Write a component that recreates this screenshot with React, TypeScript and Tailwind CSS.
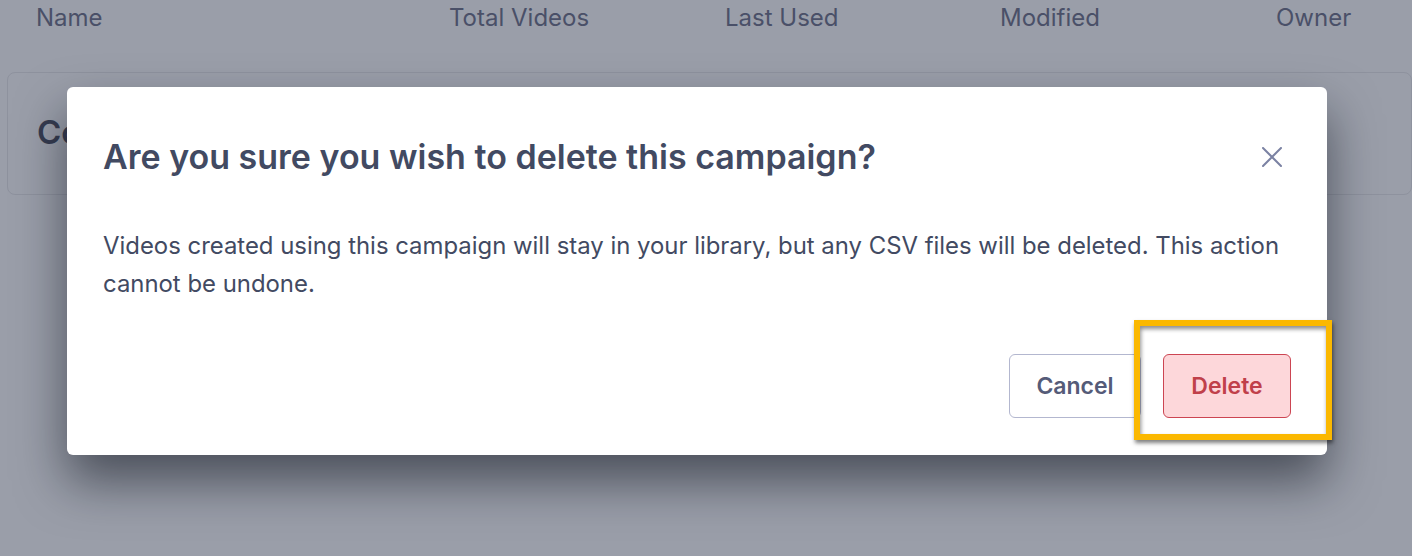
const columns = [
  { label: 'Name', width: 'w-[413px]' },
  { label: 'Total Videos', width: 'w-[276px]' },
  { label: 'Last Used', width: 'w-[275px]' },
  { label: 'Modified', width: 'w-[276px]' },
  { label: 'Owner', width: '' },
];

function CloseIcon() {
  return (
    <svg width="20" height="20" viewBox="0 0 20 20" fill="none" stroke="currentColor" strokeWidth="2" strokeLinecap="round">
      <path d="M1 1L19 19M19 1L1 19" />
    </svg>
  );
}

function DeleteModal() {
  return (
    <div className="w-[1260px] rounded-md bg-white px-[36px] pt-[40px] pb-[37px] shadow-[0_26px_50px_rgba(10,14,26,0.55)]">
      <div className="flex items-center justify-between">
        <h2 className="text-[34px] font-semibold leading-[60px] text-[#424a62]">
          Are you sure you wish to delete this campaign?
        </h2>
        <button type="button" className="mr-[9px] text-[#7b82a3]">
          <CloseIcon />
        </button>
      </div>

      <p className="mt-[40px] text-[23.9px] leading-[38px] text-[#424a62]">
        Videos created using this campaign will stay in your library, but any CSV files will be deleted. This action
        <br />
        cannot be undone.
      </p>

      <div className="mt-[51px] flex justify-end gap-[22px]">
        <button
          type="button"
          className="h-[64px] w-[132px] rounded-md border border-[#b3b7cf] text-[23px] font-semibold text-[#555b78]"
        >
          Cancel
        </button>
        <button
          type="button"
          className="h-[64px] w-[128px] rounded-md border border-[#cc4552] bg-[#fdd7da] text-[23px] font-semibold text-[#c0404a]"
        >
          Delete
        </button>
      </div>
    </div>
  );
}

export default function App() {
  return (
    <div className="relative h-[556px] w-[1412px] overflow-hidden bg-[#9a9ea9] font-['Inter',sans-serif]">
      {/* page behind the overlay, already dimmed */}
      <div className="flex pl-[36px] pt-[3px] text-[24px] leading-[30px] text-[#4a5068]">
        {columns.map((col) => (
          <div key={col.label} className={col.width}>
            {col.label}
          </div>
        ))}
      </div>

      <div className="ml-[7px] mt-[39px] h-[123px] rounded-lg border border-[#8e929e] pl-[29px] pt-[39px]">
        <span className="text-[33px] font-semibold leading-[40px] text-[#363c50]">Co</span>
      </div>

      {/* modal */}
      <div className="absolute inset-0 pl-[67px] pt-[87px]">
        <DeleteModal />
      </div>

      {/* highlight annotation */}
      <div className="absolute left-[1134px] top-[320px] h-[120px] w-[198px] border-[6px] border-[#fbb800] shadow-[1px_3px_4px_rgba(0,0,0,0.5),inset_1px_3px_4px_rgba(0,0,0,0.45)]" />
    </div>
  );
}
